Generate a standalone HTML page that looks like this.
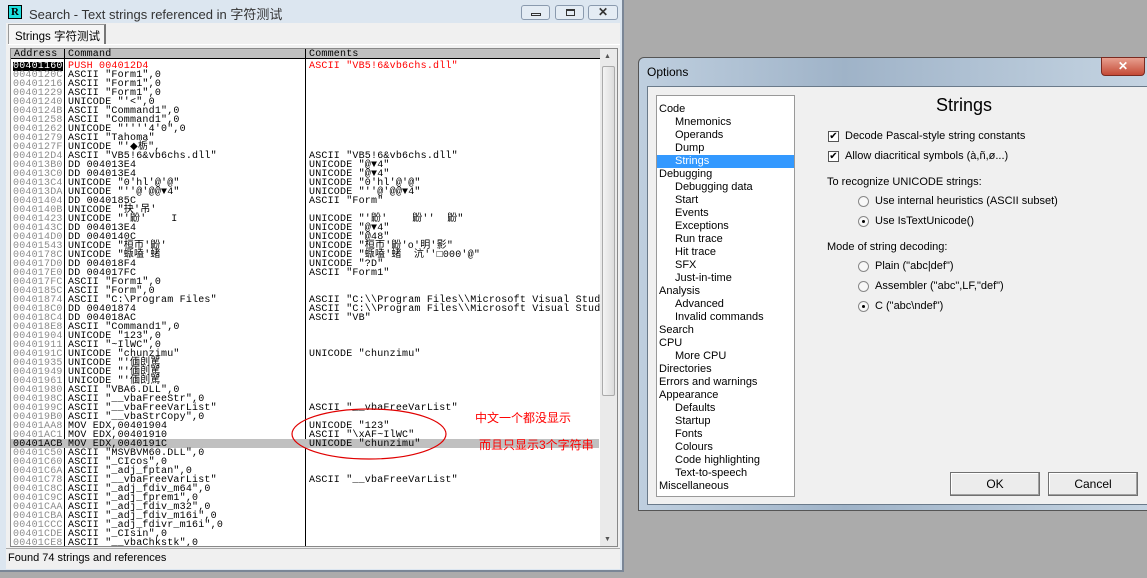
<!DOCTYPE html>
<html><head><meta charset="utf-8"><style>
*{margin:0;padding:0;box-sizing:border-box}
body{width:1147px;height:578px;background:#ababab;position:relative;overflow:hidden;font-family:"Liberation Sans","Noto Sans CJK SC",sans-serif}
.abs{position:absolute}
#win{left:0;top:0;width:624px;height:572px;background:#dce6f0;border-right:2px solid #7a8696;border-bottom:2px solid #7a8696}
.mono{font-family:"Liberation Mono","WenQuanYi Zen Hei",monospace;font-size:10px;line-height:9px;white-space:pre;letter-spacing:0.2px}
.row{height:9px;position:absolute;left:0;width:588px}
.row span{top:1px}
.a{position:absolute;left:2px;color:#8c8c8c}
.c{position:absolute;left:57px;color:#000}
.m{position:absolute;left:298px;color:#000}
.tree div{height:13px;line-height:13px;font-size:11px}
.btn{position:absolute;background:#ececec;border:1px solid #707070;box-shadow:inset -1px -1px #a0a0a0,inset 1px 1px #fff;font-size:12px;text-align:center;line-height:22px}
.cb{position:absolute;width:11px;height:11px;border:1px solid #555;background:#fff;font-size:10px;line-height:9px;text-align:center}
.rd{position:absolute;width:11px;height:11px;border:1px solid #888;border-radius:50%;background:#f8f8f8}
.lbl{position:absolute;font-size:11px;color:#000;white-space:nowrap}
</style></head><body>
<div id="win" class="abs">
 <div class="abs" style="left:8px;top:5px;width:14px;height:14px;background:#1ce0e0;border:1px solid #000;font:bold 11px 'Liberation Serif',serif;text-align:center;line-height:12px;color:#000">R</div>
 <div class="abs" style="left:29px;top:4px;font-size:13px;color:#333">Search - Text strings referenced in 字符测试</div>
 <div class="abs" style="left:521px;top:5px;width:29px;height:15px;border:1px solid #8a9aae;border-radius:3px;background:#e4ecf4"><div class="abs" style="left:9px;top:7px;width:10px;height:3px;border:1px solid #333"></div></div>
 <div class="abs" style="left:555px;top:5px;width:29px;height:15px;border:1px solid #8a9aae;border-radius:3px;background:#e4ecf4"><div class="abs" style="left:10px;top:3px;width:9px;height:7px;border:1px solid #333;border-top-width:2px"></div></div>
 <div class="abs" style="left:588px;top:5px;width:30px;height:15px;border:1px solid #8a9aae;border-radius:3px;background:#e4ecf4;font-size:12px;text-align:center;line-height:13px;color:#333;font-weight:bold">✕</div>
 <div class="abs" style="left:6px;top:23px;width:614px;height:546px;background:#f0f0f0"></div>
 <div class="abs" style="left:8px;top:24px;width:98px;height:20px;background:#f5f5f5;border:1px solid #999;border-bottom:none;border-right:2px solid #777;font-size:11.5px;padding:3px 0 0 6px">Strings 字符测试</div>
 <div class="abs" style="left:8px;top:44px;width:612px;height:1px;background:#fff"></div>
 <div class="abs" style="left:10px;top:48px;width:608px;height:499px;background:#fff;border:1px solid #888"></div>
 <div class="abs mono" style="left:11px;top:49px;width:589px;height:10px;background:#c0c0c0;border-bottom:1px solid #000">
  <span class="abs" style="left:3px;top:1px">Address</span><span class="abs" style="left:57px;top:1px">Command</span><span class="abs" style="left:298px;top:1px">Comments</span>
  <div class="abs" style="left:53px;top:0;width:1px;height:10px;background:#000"></div>
  <div class="abs" style="left:294px;top:0;width:1px;height:10px;background:#000"></div>
 </div>
 <div class="abs" style="left:64px;top:59px;width:1px;height:487px;background:#000"></div>
 <div class="abs" style="left:305px;top:59px;width:1px;height:487px;background:#000"></div>
 <div class="abs" style="left:600px;top:49px;width:17px;height:497px;background:#eaeaea"></div>
 <div class="abs" style="left:602px;top:66px;width:13px;height:330px;background:linear-gradient(90deg,#f4f4f4,#dcdcdc);border:1px solid #aaa;border-radius:2px"></div>
 <div class="abs" style="left:604px;top:53px;font-size:7px;color:#555">▲</div>
 <div class="abs" style="left:604px;top:536px;font-size:7px;color:#555">▼</div>
 <div id="rows" class="abs mono" style="left:11px;top:60px;width:589px;height:486px;overflow:hidden"></div>
 <div class="abs" style="left:6px;top:548px;width:614px;height:20px;background:#f0f0f0;border-top:1px solid #aaa;font-size:11px;padding:3px 0 0 2px">Found 74 strings and references</div>
</div>
<svg class="abs" style="left:0;top:0" width="640" height="578">
 <ellipse cx="369" cy="434" rx="77" ry="25" fill="none" stroke="#e00000" stroke-width="1.2"/>
</svg>
<div class="abs" style="left:475px;top:409px;color:#ff0000;font-size:12px">中文一个都没显示</div>
<div class="abs" style="left:479px;top:436px;color:#ff0000;font-size:12px">而且只显示3个字符串</div>

<div class="abs" style="left:638px;top:57px;width:515px;height:454px;background:linear-gradient(90deg,#bfcfdf,#9fb3c8 40%,#c5d4e2);border:1px solid #555;border-radius:6px 6px 0 0">
 <div class="abs" style="left:8px;top:7px;font-size:12px;color:#000">Options</div>
 <div class="abs" style="left:462px;top:-1px;width:44px;height:19px;background:linear-gradient(#e8a090,#c44a36);border:1px solid #7a2a20;border-radius:0 0 4px 4px;color:#fff;font-weight:bold;text-align:center;font-size:12px;line-height:17px">✕</div>
 <div class="abs" style="left:8px;top:28px;width:505px;height:419px;background:#f0f0f0;border:1px solid #6a7a8a"></div>
 <div class="abs tree" style="left:17px;top:37px;width:139px;height:402px;background:#fff;border:1px solid #999;padding:7px 0 0 2px">
  <div>Code</div><div style="padding-left:16px">Mnemonics</div><div style="padding-left:16px">Operands</div><div style="padding-left:16px">Dump</div><div style="padding-left:16px;background:#3399ff;color:#fff;margin-left:-2px;padding-left:18px">Strings</div>
  <div>Debugging</div><div style="padding-left:16px">Debugging data</div><div style="padding-left:16px">Start</div><div style="padding-left:16px">Events</div><div style="padding-left:16px">Exceptions</div><div style="padding-left:16px">Run trace</div><div style="padding-left:16px">Hit trace</div><div style="padding-left:16px">SFX</div><div style="padding-left:16px">Just-in-time</div>
  <div>Analysis</div><div style="padding-left:16px">Advanced</div><div style="padding-left:16px">Invalid commands</div><div>Search</div><div>CPU</div><div style="padding-left:16px">More CPU</div><div>Directories</div><div>Errors and warnings</div><div>Appearance</div><div style="padding-left:16px">Defaults</div><div style="padding-left:16px">Startup</div><div style="padding-left:16px">Fonts</div><div style="padding-left:16px">Colours</div><div style="padding-left:16px">Code highlighting</div><div style="padding-left:16px">Text-to-speech</div><div>Miscellaneous</div>
 </div>
 <div class="abs" style="left:297px;top:37px;font-size:18px;color:#000">Strings</div>
 <div class="cb" style="left:189px;top:73px">✔</div><div class="lbl" style="left:206px;top:72px">Decode Pascal-style string constants</div>
 <div class="cb" style="left:189px;top:93px">✔</div><div class="lbl" style="left:206px;top:92px">Allow diacritical symbols (à,ñ,ø...)</div>
 <div class="lbl" style="left:188px;top:118px">To recognize UNICODE strings:</div>
 <div class="rd" style="left:219px;top:138px"></div><div class="lbl" style="left:236px;top:137px">Use internal heuristics (ASCII subset)</div>
 <div class="rd" style="left:219px;top:158px"><div class="abs" style="left:3px;top:3px;width:3px;height:3px;background:#000;border-radius:50%"></div></div><div class="lbl" style="left:236px;top:157px">Use IsTextUnicode()</div>
 <div class="lbl" style="left:188px;top:183px">Mode of string decoding:</div>
 <div class="rd" style="left:219px;top:203px"></div><div class="lbl" style="left:236px;top:202px">Plain ("abc|def")</div>
 <div class="rd" style="left:219px;top:223px"></div><div class="lbl" style="left:236px;top:222px">Assembler ("abc",LF,"def")</div>
 <div class="rd" style="left:219px;top:243px"><div class="abs" style="left:3px;top:3px;width:3px;height:3px;background:#000;border-radius:50%"></div></div><div class="lbl" style="left:236px;top:242px">C ("abc\ndef")</div>
 <div class="btn" style="left:311px;top:414px;width:90px;height:24px">OK</div>
 <div class="btn" style="left:409px;top:414px;width:90px;height:24px">Cancel</div>
</div>
<script>
const R=[["00401160","PUSH 004012D4",'ASCII "VB5!6&vb6chs.dll"'],
["0040120C",'ASCII "Form1",0',""],["00401216",'ASCII "Form1",0',""],["00401229",'ASCII "Form1",0',""],
["00401240",'UNICODE "\'<",0',""],["0040124B",'ASCII "Command1",0',""],["00401258",'ASCII "Command1",0',""],
["00401262",'UNICODE "\'\'\'\'4\'0",0',""],["00401279",'ASCII "Tahoma"',""],["0040127F",'UNICODE "\'◆栃",',""],
["004012D4",'ASCII "VB5!6&vb6chs.dll"','ASCII "VB5!6&vb6chs.dll"'],["004013B0","DD 004013E4",'UNICODE "@▼4"'],
["004013C0","DD 004013E4",'UNICODE "@▼4"'],["004013C4",'UNICODE "0\'hl\'@\'@"','UNICODE "0\'hl\'@\'@"'],
["004013DA",'UNICODE "\'\'@\'@@▼4"','UNICODE "\'\'@\'@@▼4"'],["00401404","DD 0040185C",'ASCII "Form"'],
["0040140B",'UNICODE "抉\'吊\'',""],["00401423",'UNICODE "\'鼢\'    I','UNICODE "\'鼢\'    鼢\'\'  鼢"'],
["0040143C","DD 004013E4",'UNICODE "@▼4"'],["004014D0","DD 0040140C",'UNICODE "@48"'],
["00401543",'UNICODE "桓帀\'鼢\'',"UNICODE \"桓帀'鼢'o'明'影\""],["0040178C",'UNICODE "蝂嗑\'蝫',"UNICODE \"蝂嗑'蝫  沆''□000'@\""],
["004017D0","DD 004018F4",'UNICODE "?D"'],["004017E0","DD 004017FC",'ASCII "Form1"'],
["004017FC",'ASCII "Form1",0',""],["0040185C",'ASCII "Form",0',""],
["00401874",'ASCII "C:\\Program Files"','ASCII "C:\\\\Program Files\\\\Microsoft Visual Studio'],
["004018C0","DD 00401874",'ASCII "C:\\\\Program Files\\\\Microsoft Visual Studio'],["004018C4","DD 004018AC",'ASCII "VB"'],
["004018E8",'ASCII "Command1",0',""],["00401904",'UNICODE "123",0',""],["00401911",'ASCII "~IlWC",0',""],
["0040191C",'UNICODE "chunzimu"','UNICODE "chunzimu"'],["00401935",'UNICODE "\'偭剆駡',""],["00401949",'UNICODE "\'偭剆駡',""],["00401961",'UNICODE "\'偭剆駡',""],
["00401980",'ASCII "VBA6.DLL",0',""],["0040198C",'ASCII "__vbaFreeStr",0',""],["0040199C",'ASCII "__vbaFreeVarList"','ASCII "__vbaFreeVarList"'],
["004019B0",'ASCII "__vbaStrCopy",0',""],["00401AA8","MOV EDX,00401904",'UNICODE "123"'],["00401AC1","MOV EDX,00401910",'ASCII "\\xAF~IlWC"'],
["00401ACB","MOV EDX,0040191C",'UNICODE "chunzimu"'],["00401C50",'ASCII "MSVBVM60.DLL",0',""],["00401C60",'ASCII "_CIcos",0',""],
["00401C6A",'ASCII "_adj_fptan",0',""],["00401C78",'ASCII "__vbaFreeVarList"','ASCII "__vbaFreeVarList"'],["00401C8C",'ASCII "_adj_fdiv_m64",0',""],
["00401C9C",'ASCII "_adj_fprem1",0',""],["00401CAA",'ASCII "_adj_fdiv_m32",0',""],["00401CBA",'ASCII "_adj_fdiv_m16i",0',""],
["00401CCC",'ASCII "_adj_fdivr_m16i",0',""],["00401CDE",'ASCII "_CIsin",0',""],["00401CE8",'ASCII "__vbaChkstk",0',""]];
const esc=s=>s.replace(/&/g,"&amp;").replace(/</g,"&lt;");
let h="";R.forEach((r,i)=>{let bg="",ac="",cc="";
if(i==0){ac="background:#000;color:#fff";cc="color:#f00"}
if(i==42){bg="background:#c0c0c0";ac="color:#000"}
h+=`<div class="row" style="top:${i*9+1}px;${bg}"><span class="a" style="${ac}">${r[0]}</span><span class="c" style="${cc}">${esc(r[1])}</span><span class="m" style="${cc}">${esc(r[2])}</span></div>`});
document.getElementById("rows").innerHTML=h;
</script>
</body></html>
